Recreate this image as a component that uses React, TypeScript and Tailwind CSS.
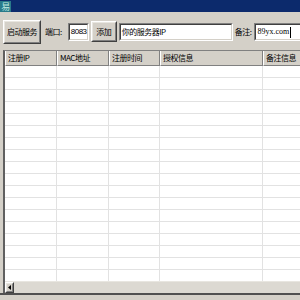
import React from "react";

const font = { fontFamily: '"Noto Sans CJK SC", "Liberation Sans", sans-serif' };

function Raised({ children, className = "" }: { children?: React.ReactNode; className?: string }) {
  return (
    <div className={`shrink-0 border border-t-white border-l-white border-r-[#404040] border-b-[#404040] bg-[#d4d0c8] ${className}`}>
      <div className="w-full h-full border border-t-[#e8e6e0] border-l-[#e8e6e0] border-r-[#808080] border-b-[#808080] flex items-center justify-center whitespace-nowrap">
        {children}
      </div>
    </div>
  );
}

function Sunken({ children, className = "" }: { children?: React.ReactNode; className?: string }) {
  return (
    <div className={`shrink-0 border border-t-[#808080] border-l-[#808080] border-r-white border-b-white ${className}`}>
      <div className="w-full h-full border border-t-[#404040] border-l-[#404040] border-r-[#d4d0c8] border-b-[#d4d0c8] bg-white flex items-center pl-[1px] overflow-hidden whitespace-nowrap">
        {children}
      </div>
    </div>
  );
}

const cols = [
  { label: "注册IP", w: 52 },
  { label: "MAC地址", w: 52 },
  { label: "注册时间", w: 51 },
  { label: "授权信息", w: 103 },
  { label: "备注信息", w: 60 },
];

export default function App() {
  const rows = Array.from({ length: 18 });
  return (
    <div className="w-[300px] h-[300px] overflow-hidden bg-[#d4d0c8] text-[8px] tracking-[-0.5px] text-black leading-none" style={font}>
      {/* title bar */}
      <div className="h-[12px] bg-[#0c2a6c] flex items-center">
        <div className="w-[11px] h-[11px] bg-[#2a7a8a] flex items-center justify-center text-[9px] text-[#bfe8e0] leading-none">易</div>
      </div>
      {/* toolbar */}
      <div className="h-[38px] flex items-center pl-[3px] pt-[1px] whitespace-nowrap">
        <Raised className="w-[38px] h-[24px]">
          <span>启动服务</span>
        </Raised>
        <span className="ml-[4px] mt-[1px] shrink-0">端口:</span>
        <Sunken className="ml-[6px] w-[21px] h-[18px] mt-[1px]">
          <span className="text-[8px] tracking-[-0.5px]" style={{ fontFamily: '"Liberation Sans", sans-serif' }}>8083</span>
        </Sunken>
        <Raised className="ml-[2px] w-[26px] h-[21px]">
          <span>添加</span>
        </Raised>
        <Sunken className="ml-[2px] w-[114px] h-[18px] mt-[1px]">
          <span>你的服务器IP</span>
        </Sunken>
        <span className="ml-[2px] mt-[1px] shrink-0">备注:</span>
        <Sunken className="ml-[3px] w-[60px] h-[18px] mt-[1px]">
          <span className="text-[8px] tracking-normal" style={{ fontFamily: '"Liberation Serif", serif' }}>89yx.com</span>
          <span className="w-[1px] h-[11px] bg-black ml-[1px]" />
        </Sunken>
      </div>
      {/* table */}
      <div className="ml-[3px] w-[310px] h-[243px] border-l-2 border-t border-l-[#606060] border-t-[#808080] bg-white flex flex-col">
        <div className="flex h-[15px] shrink-0 bg-[#d4d0c8]">
          {cols.map((c, i) => (
            <div
              key={i}
              className="h-full border-r border-b border-r-[#808080] border-b-[#808080] border-l border-l-white flex items-center pl-[2px] shrink-0 whitespace-nowrap"
              style={{ width: c.w }}
            >
              {c.label}
            </div>
          ))}
          <div className="flex-1 border-b border-b-[#808080] border-l border-l-white" />
        </div>
        <div className="flex-1 flex flex-col overflow-hidden">
          {rows.map((_, r) => (
            <div key={r} className="flex h-[12px] shrink-0 border-b border-b-[#e2e2e2]">
              {cols.map((c, i) => (
                <div key={i} className="h-full border-r border-r-[#e2e2e2] shrink-0" style={{ width: c.w }} />
              ))}
            </div>
          ))}
        </div>
        {/* scrollbar */}
        <div className="h-[12px] shrink-0 bg-[#d4d0c8] flex border-t border-t-[#e8e6e0]">
          <Raised className="w-[9px] h-full">
            <svg width="3" height="5" viewBox="0 0 3 5"><path d="M3 0 L0 2.5 L3 5 Z" fill="#000" /></svg>
          </Raised>
          <div className="flex-1 bg-[#dcd9d2]" />
        </div>
      </div>
      <div className="h-[2px] bg-[#505050]" />
    </div>
  );
}
